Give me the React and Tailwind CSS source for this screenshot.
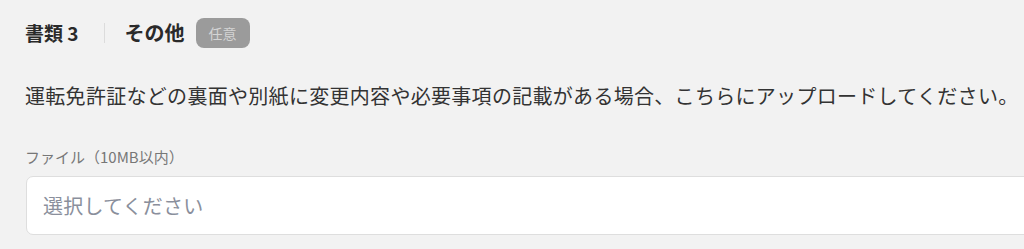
export default function App() {
  const font = { fontFamily: '"Noto Sans CJK JP", "Noto Sans", sans-serif' };
  return (
    <div className="w-[1024px] h-[249px] bg-[#f2f2f2] overflow-hidden pl-[25px] pt-[17px]" style={font}>
      <div className="flex items-center h-[31px]">
        <span className="text-[19px] font-bold text-[#2a2a2a] leading-none">書類 3</span>
        <span className="ml-[25px] w-px h-[20px] bg-[#dcdcdc]" />
        <span className="ml-[20px] text-[20px] font-bold text-[#2a2a2a] leading-none">その他</span>
        <span className="ml-[11px] w-[54px] h-[30px] rounded-[8px] bg-[#9b9b9b] text-[#d4d4d4] text-[14px] flex items-center justify-center leading-none">任意</span>
      </div>
      <p className="mt-[34px] text-[20px] text-[#333] leading-[28px] whitespace-nowrap tracking-[0.3px]">
        運転免許証などの裏面や別紙に変更内容や必要事項の記載がある場合、こちらにアップロードしてください。
      </p>
      <div className="mt-[37px] text-[15px] text-[#777] leading-[20px]">ファイル（10MB以内）</div>
      <div className="mt-[9px] ml-px w-[1010px] h-[59px] bg-white border border-[#dedede] rounded-[7px] flex items-center pl-[16px]">
        <span className="text-[20px] text-[#8a8f9c] leading-none tracking-[0.2px]">選択してください</span>
      </div>
    </div>
  );
}
